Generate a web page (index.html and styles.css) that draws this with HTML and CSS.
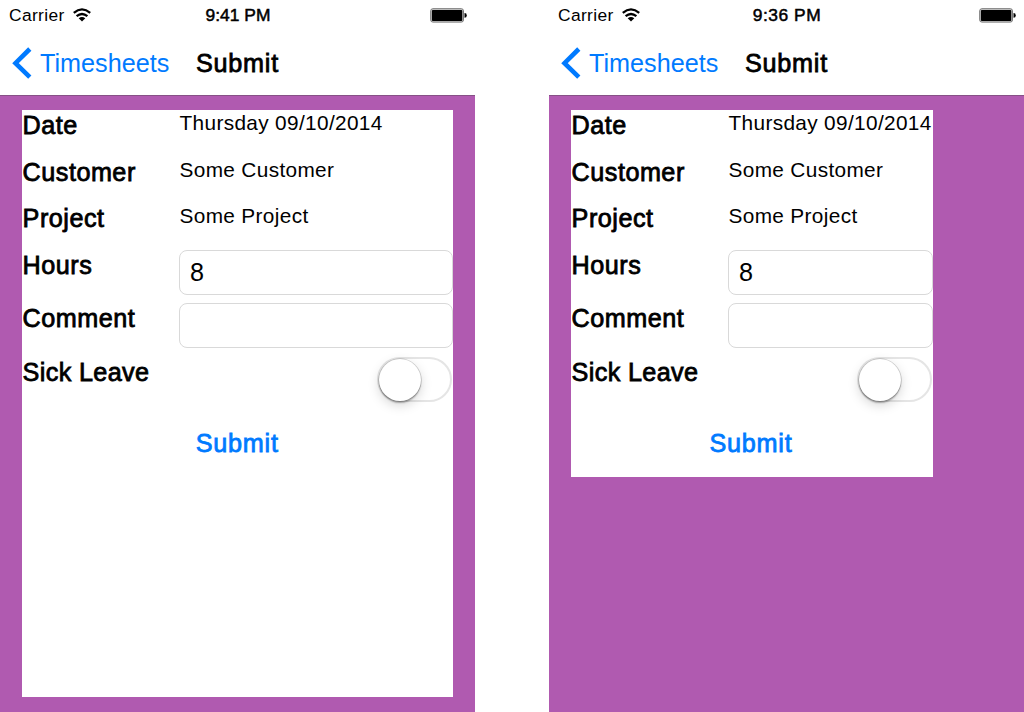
FILE: index.html
```html
<!DOCTYPE html>
<html lang="en">
<head>
<meta charset="utf-8">
<title>Timesheets</title>
<link rel="stylesheet" href="styles.css">
</head>
<body>
<main class="screens">
  <section class="phone">
    <header class="top">
      <div class="status">
        <div class="carrier"><span>Carrier</span>
          <svg class="wifi" viewBox="0 0 18 14" width="18" height="14"><g fill="none" stroke="#000" stroke-width="2.3"><path d="M.8 4.8Q9-2 17.2 4.8"/><path d="M3.6 8.2Q9 3.7 14.4 8.2"/></g><path d="M5.7 10.3Q9 7.6 12.3 10.3L9 13.5Z"/></svg>
        </div>
        <span class="time">9:41 PM</span>
        <svg class="battery" viewBox="0 0 37 15" width="37" height="15"><rect x=".7" y=".7" width="32.8" height="13.4" rx="2.2" fill="#ccc" stroke="#777" stroke-width="1"/><rect x="1.9" y="1.9" width="30.4" height="11" rx="1"/><path d="M34.5 5Q36.8 5 36.8 7.4T34.5 9.8Z"/></svg>
      </div>
      <nav class="nav">
        <a class="back"><svg viewBox="0 0 22 32" width="22" height="32"><path d="M19.8 2 5.5 16.2 19.8 30.2" fill="none" stroke="#007aff" stroke-width="4.6"/></svg><span>Timesheets</span></a>
        <h1 class="title">Submit</h1>
      </nav>
    </header>
    <div class="content">
      <form class="form form-fill">
        <label class="label">Date</label><span class="value">Thursday 09/10/2014</span>
        <label class="label">Customer</label><span class="value">Some Customer</span>
        <label class="label">Project</label><span class="value">Some Project</span>
        <label class="label">Hours</label><div class="field">8</div>
        <label class="label">Comment</label><div class="field"></div>
        <label class="label label-tight">Sick Leave</label><div class="switch"><span class="knob"></span></div>
        <div class="submit">Submit</div>
      </form>
    </div>
  </section>
  <section class="phone">
    <header class="top">
      <div class="status">
        <div class="carrier"><span>Carrier</span>
          <svg class="wifi" viewBox="0 0 18 14" width="18" height="14"><g fill="none" stroke="#000" stroke-width="2.3"><path d="M.8 4.8Q9-2 17.2 4.8"/><path d="M3.6 8.2Q9 3.7 14.4 8.2"/></g><path d="M5.7 10.3Q9 7.6 12.3 10.3L9 13.5Z"/></svg>
        </div>
        <span class="time time-wide">9:36 PM</span>
        <svg class="battery" viewBox="0 0 37 15" width="37" height="15"><rect x=".7" y=".7" width="32.8" height="13.4" rx="2.2" fill="#ccc" stroke="#777" stroke-width="1"/><rect x="1.9" y="1.9" width="30.4" height="11" rx="1"/><path d="M34.5 5Q36.8 5 36.8 7.4T34.5 9.8Z"/></svg>
      </div>
      <nav class="nav">
        <a class="back"><svg viewBox="0 0 22 32" width="22" height="32"><path d="M19.8 2 5.5 16.2 19.8 30.2" fill="none" stroke="#007aff" stroke-width="4.6"/></svg><span>Timesheets</span></a>
        <h1 class="title">Submit</h1>
      </nav>
    </header>
    <div class="content">
      <form class="form form-fit">
        <label class="label">Date</label><span class="value">Thursday 09/10/2014</span>
        <label class="label">Customer</label><span class="value">Some Customer</span>
        <label class="label">Project</label><span class="value">Some Project</span>
        <label class="label">Hours</label><div class="field">8</div>
        <label class="label">Comment</label><div class="field"></div>
        <label class="label label-tight">Sick Leave</label><div class="switch"><span class="knob"></span></div>
        <div class="submit">Submit</div>
      </form>
    </div>
  </section>
</main>
</body>
</html>
```
FILE: styles.css
```css
* { box-sizing: border-box; }
body {
  margin: 0;
  background: #fff;
  color: #000;
  font-family: "Liberation Sans", Arial, sans-serif;
  font-size: 25.2px;
}
.screens { display: flex; gap: 74px; height: 712px; overflow: hidden; }
.phone { display: flex; flex-direction: column; flex: none; width: 475px; }
.top { height: 96px; border-bottom: 1px solid #865086; }
.status {
  display: grid;
  grid-template-columns: 1fr auto 1fr;
  align-items: center;
  height: 31px;
  padding: 0 8px 0 9px;
  font-size: 17.4px;
  line-height: 31px;
}
.carrier { display: flex; align-items: center; gap: 8px; letter-spacing: .35px; }
.wifi { margin-top: -1px; }
.time { letter-spacing: .05px; -webkit-text-stroke: .5px #000; }
.time-wide { letter-spacing: .5px; }
.battery { justify-self: end; }
.nav { display: flex; align-items: center; height: 64px; padding-left: 10px; }
.back { display: flex; align-items: center; width: 186px; gap: 8px; color: #007aff; }
.back svg { margin-top: -1px; }
.title {
  margin: 0;
  font-size: 25.2px;
  font-weight: 400;
  letter-spacing: .75px;
  -webkit-text-stroke: .8px #000;
}
.content { flex: 1; padding: 14px 22.5px 15px 22px; background: #b05ab0; }
.form {
  display: grid;
  grid-template-columns: 157.5px 1fr;
  grid-template-rows: 37.6px 37.2px 38.2px 44px 45px 45px 44px;
  row-gap: 9px;
  align-content: start;
  background: #fff;
}
.form-fill { height: 587px; }
.form-fit { width: 361.5px; height: 367px; }
.label { padding-left: .6px; line-height: 31px; letter-spacing: .5px; -webkit-text-stroke: .8px #000; }
.label-tight { letter-spacing: .35px; }
.value { font-size: 20.8px; line-height: 26px; letter-spacing: .35px; white-space: nowrap; }
.field {
  height: 45px;
  margin-left: -.5px;
  padding-left: 10px;
  border: 1px solid #d9d9d9;
  border-radius: 8px;
  line-height: 42px;
}
.switch {
  justify-self: end;
  width: 75px;
  height: 45.5px;
  margin-right: .5px;
  border: 2px solid #e5e5e5;
  border-radius: 23px;
}
.knob {
  display: block;
  width: 42px;
  height: 42px;
  border-radius: 50%;
  background: #fff;
  box-shadow: 0 0 0 .7px rgba(0,0,0,.18), 0 2px 1.5px rgba(0,0,0,.28), 0 4px 12px rgba(0,0,0,.17);
}
.submit {
  grid-column: 1 / -1;
  padding-top: 10px;
  text-align: center;
  line-height: 44px;
  color: #007aff;
  letter-spacing: .75px;
  -webkit-text-stroke: .8px #007aff;
}
.form-fit .submit { padding-right: 1.5px; }
```
